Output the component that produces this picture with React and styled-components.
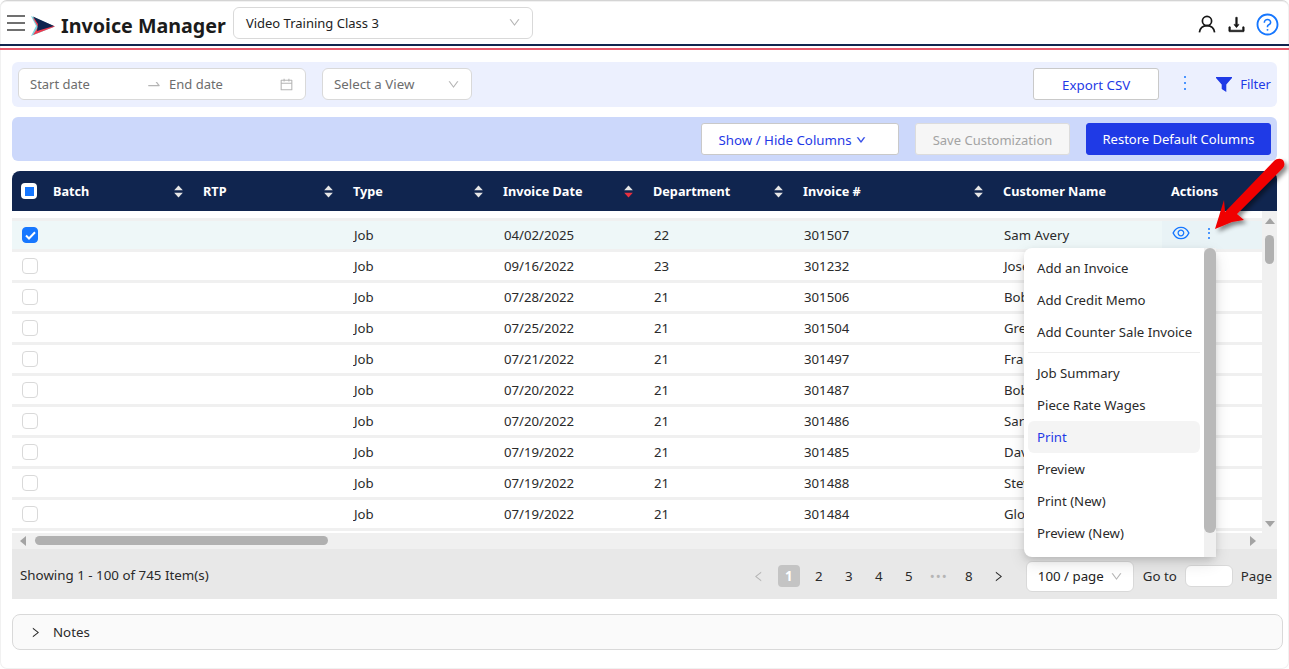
import React from 'react';
import styled, { createGlobalStyle } from 'styled-components';
import {
  AiOutlineCalendar,
  AiOutlineDown,
  AiOutlineDownload,
  AiOutlineEye,
  AiOutlineLeft,
  AiOutlineQuestionCircle,
  AiOutlineRight,
  AiOutlineSwapRight,
} from 'react-icons/ai';

const GlobalStyle = createGlobalStyle`
  html, body {
    margin: 0;
    padding: 0;
    height: 100%;
    background: #fff;
    overflow: hidden;
  }
  body {
    font-family: "Noto Sans", "Open Sans", sans-serif;
    font-size: 14px;
    color: #222;
  }
  * {
    box-sizing: border-box;
  }
`;

const Page = styled.div`
  position: relative;
  width: 1289px;
  height: 669px;
  overflow: hidden;
  border-top: 1px solid #d4d4d4;
  border-radius: 7px;
  box-shadow: inset 0 0 0 1px #f1f1f1;
`;

const Header = styled.header`
  display: flex;
  align-items: center;
  height: 43px;
  padding: 0 9px 0 7px;
`;

const Hamburger = styled.div`
  display: flex;
  flex-direction: column;
  justify-content: space-between;
  width: 18px;
  height: 16px;
  margin: 1px 7px 0 0;

  span {
    display: block;
    height: 2px;
    background: #707070;
  }
`;

const LogoMark = styled.svg`
  flex: none;
  margin: 6px 0 0 -1px;
`;

const Title = styled.h1`
  margin: 7px 7px 0 6px;
  font-size: 19.7px;
  line-height: 28px;
  font-weight: 700;
  color: #1b1b1b;
  white-space: nowrap;
`;

const Select = styled.div`
  display: flex;
  align-items: center;
  justify-content: space-between;
  width: ${(props) => props.width}px;
  height: ${(props) => props.height || 32}px;
  padding: 0 11px;
  background: #fff;
  border: 1px solid #d9d9d9;
  border-radius: 6px;
  color: ${(props) => (props.muted ? '#6d6d6d' : '#222')};
  font-size: 13.3px;
  white-space: nowrap;

  svg {
    color: #b5b5b5;
    font-size: 13px;
  }
`;

const ClassSelect = styled(Select)`
  padding: 0 11px 0 12px;
  font-size: 13px;
`;

const HeaderIcons = styled.div`
  display: flex;
  align-items: center;
  margin: 3px 0 0 auto;
  color: #161616;
`;

const DownloadIcon = styled(AiOutlineDownload)`
  font-size: 21px;
  margin: 0 8px 0 10px;
  stroke: #161616;
  stroke-width: 30;
`;

const HelpIcon = styled(AiOutlineQuestionCircle)`
  color: #1677ff;
  font-size: 25px;
`;

const Stripe = styled.div`
  height: 6px;
  border-top: 2px solid #10254f;
  border-bottom: 2px solid #e8596b;
`;

const Bar = styled.div`
  display: flex;
  align-items: center;
  margin: 0 12px;
  border-radius: 6px;
`;

const FilterBar = styled(Bar)`
  height: 45px;
  margin-top: 12px;
  padding: 0 6px 1px;
  gap: 16px;
  background: #ecf0fe;
`;

const DateRange = styled.div`
  display: flex;
  align-items: center;
  width: 288px;
  height: 32px;
  padding: 0 11px;
  background: #fff;
  border: 1px solid #d9d9d9;
  border-radius: 6px;
  color: #6d6d6d;
  font-size: 13px;
`;

const StartText = styled.span`
  width: 116px;
`;

const EndText = styled.span`
  flex: 1;
`;

const RangeArrow = styled(AiOutlineSwapRight)`
  color: #b5b5b5;
  font-size: 16px;
  margin-right: 7px;
`;

const CalendarIcon = styled(AiOutlineCalendar)`
  color: #b5b5b5;
  font-size: 15px;
`;

const FilterActions = styled.div`
  display: flex;
  align-items: center;
  margin-left: auto;
`;

const Button = styled.button`
  height: ${(props) => props.height || 32}px;
  width: ${(props) => props.width}px;
  padding: 1px 0 0;
  border-radius: 3px;
  border: 1px solid #c9c9c9;
  background: #fff;
  color: #1f3ae6;
  font-family: inherit;
  font-size: 13.3px;
  white-space: nowrap;
`;

const ColumnsButton = styled(Button)`
  padding-right: 16px;
`;

const DisabledButton = styled(Button)`
  background: #f6f6f6;
  border-color: #dcdcdc;
  color: #a3a3a3;
  font-size: 13px;
`;

const PrimaryButton = styled(Button)`
  padding-top: 0;
  background: #1f3ae6;
  border-color: #1f3ae6;
  color: #fff;
  font-size: 13px;
`;

const Dots = styled.span`
  display: flex;
  flex-direction: column;
  justify-content: space-between;
  width: 2px;
  height: ${(props) => props.tall}px;

  i {
    display: block;
    height: 2px;
    background: #1677ff;
    border-radius: 50%;
  }
`;

const BarDots = styled(Dots)`
  margin: -3px 0 0 25px;
`;

const FilterLink = styled.span`
  display: flex;
  align-items: center;
  gap: 8px;
  margin-left: 30px;
  color: #1f3ae6;
  font-size: 13px;
`;

const ColumnBar = styled(Bar)`
  height: 44px;
  margin-top: 10px;
  padding: 0 6px 0 0;
  justify-content: flex-end;
  gap: 16px;
  background: #ccd8fb;
`;

const DownSmall = styled(AiOutlineDown)`
  font-size: 10px;
  margin-left: 4px;
  stroke: currentColor;
  stroke-width: 60;
`;

const Table = styled.div`
  position: relative;
  margin: 10px 12px 0;
`;

const columns = '41px 150px 150px 150px 150px 150px 200px 168px minmax(0, 1fr)';

const HeadRow = styled.div`
  display: grid;
  grid-template-columns: ${columns};
  align-items: center;
  height: 40px;
  background: #10254f;
  border-radius: 8px 8px 0 0;
  color: #fff;
  font-size: 12.7px;
  font-weight: 700;
`;

const HeadCell = styled.div`
  display: flex;
  align-items: center;
  justify-content: space-between;
  padding-right: 20px;
  white-space: nowrap;
`;

const SelectAll = styled.span`
  display: flex;
  align-items: center;
  justify-content: center;
  width: 16px;
  height: 16px;
  margin-left: 9px;
  background: #fff;
  border-radius: 4px;

  i {
    display: block;
    width: 9px;
    height: 9px;
    background: #1677ff;
  }
`;

const BodyWrap = styled.div`
  display: grid;
  grid-template-columns: 1fr 15px;
  height: 322px;
`;

const Rows = styled.div`
  padding-top: 7px;
  overflow: hidden;
`;

const Row = styled.div`
  display: grid;
  grid-template-columns: ${columns};
  align-items: center;
  height: 31px;
  border-top: 3px solid #f0f0f0;
  background: ${(props) => (props.selected ? '#eef7f8' : '#fff')};
  font-size: 13.2px;
  color: #2a2a2a;

  &:last-child {
    height: 34px;
    border-bottom: 3px solid #f0f0f0;
  }
`;

const Cell = styled.div`
  padding-left: 1px;
  white-space: nowrap;
  overflow: hidden;
`;

const ActionCell = styled.div`
  grid-column: 9;
  align-self: stretch;
  display: flex;
  align-items: center;
  gap: 17px;
  margin-left: -9px;
  padding: 0 0 4px 9px;
  background: #e9f3f6;
  color: #1677ff;

  svg {
    font-size: 20px;
  }
`;

const Check = styled.span`
  display: flex;
  align-items: center;
  justify-content: center;
  width: 16px;
  height: 16px;
  margin-left: 10px;
  border-radius: 4px;
  border: 1px solid ${(props) => (props.checked ? '#1677ff' : '#d9d9d9')};
  background: ${(props) => (props.checked ? '#1677ff' : '#fff')};
`;

const VerticalTrack = styled.div`
  position: relative;
  display: flex;
  flex-direction: column;
  justify-content: space-between;
  align-items: center;
  padding: 7px 0 6px;
  background: #f0f0f0;
`;

const Triangle = styled.span`
  width: 0;
  height: 0;
  border-left: ${(props) => (props.dir === 'right' ? '6px solid #a3a3a3' : props.dir === 'left' ? 'none' : '5px solid transparent')};
  border-right: ${(props) => (props.dir === 'left' ? '6px solid #a3a3a3' : props.dir === 'right' ? 'none' : '5px solid transparent')};
  border-top: ${(props) => (props.dir === 'down' ? '6px solid #a3a3a3' : props.dir === 'up' ? 'none' : '5px solid transparent')};
  border-bottom: ${(props) => (props.dir === 'up' ? '6px solid #a3a3a3' : props.dir === 'down' ? 'none' : '5px solid transparent')};
`;

const VerticalThumb = styled.span`
  position: absolute;
  top: 24px;
  left: 3px;
  width: 9px;
  height: 29px;
  border-radius: 5px;
  background: #b0b0b0;
`;

const HorizontalTrack = styled.div`
  position: relative;
  display: flex;
  align-items: center;
  justify-content: space-between;
  height: 16px;
  padding: 0 21px 0 8px;
  background: #f0f0f0;
`;

const HorizontalThumb = styled.span`
  position: absolute;
  left: 23px;
  top: 3px;
  width: 293px;
  height: 9px;
  border-radius: 5px;
  background: #b0b0b0;
`;

const Footer = styled.div`
  display: flex;
  align-items: center;
  height: 50px;
  padding: 0 5px 0 8px;
  background: #e8e8e8;
  font-size: 13.35px;
  color: #2a2a2a;
`;

const ShowingText = styled.span`
  padding-top: 2px;
`;

const Pager = styled.div`
  display: flex;
  align-items: center;
  margin: 4px 0 0 auto;
  font-size: 13.3px;
`;

const PageItem = styled.span`
  display: flex;
  align-items: center;
  justify-content: center;
  width: 22px;
  height: 22px;
  margin-right: 8px;
  border-radius: 4px;
  background: ${(props) => (props.active ? '#c4c4c4' : 'transparent')};
  color: ${(props) => (props.active ? '#fff' : props.faded ? '#b5b5b5' : '#2a2a2a')};
  font-weight: ${(props) => (props.active ? 700 : 400)};
  letter-spacing: ${(props) => (props.faded ? '1px' : 0)};

  svg {
    font-size: 13px;
  }
`;

const PageSize = styled(Select)`
  margin: 0 9px 0 8px;
  padding: 0 10px 0 11px;
  border-radius: 6px;
  font-size: 13.3px;
`;

const GoInput = styled.span`
  display: block;
  width: 48px;
  height: 22px;
  margin: 0 8px;
  background: #fff;
  border: 1px solid #d9d9d9;
  border-radius: 6px;
`;

const Notes = styled.div`
  display: flex;
  align-items: center;
  gap: 11px;
  height: 36px;
  margin: 15px 6px 0 12px;
  padding-left: 16px;
  background: #fafafa;
  border: 1px solid #d9d9d9;
  border-radius: 8px;
  font-size: 13.3px;
  color: #2a2a2a;

  svg {
    font-size: 13px;
  }
`;

const Menu = styled.div`
  position: absolute;
  left: 1024px;
  top: 247px;
  width: 192px;
  height: 309px;
  padding: 4px 16px 4px 4px;
  background: #fff;
  border-radius: 8px;
  box-shadow: 0 6px 16px rgba(0, 0, 0, 0.12), 0 3px 6px rgba(0, 0, 0, 0.1);
`;

const MenuItem = styled.div`
  height: 32px;
  padding: 0 9px;
  line-height: 32px;
  border-radius: 6px;
  font-size: 13.2px;
  white-space: nowrap;
  background: ${(props) => (props.active ? '#f4f4f4' : 'transparent')};
  color: ${(props) => (props.active ? '#1f3ae6' : '#2a2a2a')};
`;

const MenuDivider = styled.div`
  height: 1px;
  margin: 4px 0 4px;
  background: #ededed;
`;

const MenuTrack = styled.div`
  position: absolute;
  top: 0;
  right: 0;
  bottom: 0;
  width: 12px;
  background: #f0f0f0;
`;

const MenuThumb = styled.span`
  position: absolute;
  top: 0;
  right: 0;
  width: 12px;
  height: 285px;
  border-radius: 6px;
  background: #b9b9b9;
`;

const Pointer = styled.svg`
  position: absolute;
  left: 1205px;
  top: 155px;
  width: 84px;
  height: 84px;
  overflow: visible;
`;

const Logo = () => (
  <LogoMark width="24" height="20" viewBox="0 0 24 20">
    <path d="M0 0 L24 10.5 L0 20 L5 10 Z" fill="#7fd3dc" />
    <path d="M2 2 L24 10.5 L2 19 L7 11 Z" fill="#ee3b50" />
    <path d="M2 0.5 L23 10 L6 15 L7 8 Z" fill="#10254f" />
  </LogoMark>
);

const UserIcon = () => (
  <svg width="18" height="18" viewBox="0 0 18 18" fill="none" stroke="#161616" strokeWidth="1.7">
    <circle cx="9" cy="6" r="4.6" />
    <path d="M1.4 17.4 C2 13 5 10.6 9 10.6 C13 10.6 16 13 16.6 17.4" />
  </svg>
);

const FunnelIcon = () => (
  <svg width="16" height="15" viewBox="0 0 16 15" fill="#1f3ae6">
    <path d="M0 0 H16 V1 L10.3 7.5 V15 L5.7 12 V7.5 L0 1 Z" />
  </svg>
);

const SortCaret = ({ active }) => (
  <svg width="9" height="13" viewBox="0 0 9 13">
    <path d="M4.5 0.5 L8.8 5.2 H0.2 Z" fill="#e6e6e6" />
    <path d="M4.5 12.5 L8.8 7.8 H0.2 Z" fill={active ? '#e8303f' : '#e6e6e6'} />
  </svg>
);

const CheckMark = () => (
  <svg width="11" height="9" viewBox="0 0 11 9" fill="none" stroke="#fff" strokeWidth="2">
    <path d="M1 4.5 L4 7.5 L10 1.2" />
  </svg>
);

const headers = [
  { label: 'Batch' },
  { label: 'RTP' },
  { label: 'Type' },
  { label: 'Invoice Date', active: true },
  { label: 'Department' },
  { label: 'Invoice #' },
  { label: 'Customer Name', plain: true },
];

const rows = [
  { date: '04/02/2025', dept: '22', invoice: '301507', name: 'Sam Avery' },
  { date: '09/16/2022', dept: '23', invoice: '301232', name: 'Jose' },
  { date: '07/28/2022', dept: '21', invoice: '301506', name: 'Bob' },
  { date: '07/25/2022', dept: '21', invoice: '301504', name: 'Greg' },
  { date: '07/21/2022', dept: '21', invoice: '301497', name: 'Frank' },
  { date: '07/20/2022', dept: '21', invoice: '301487', name: 'Bob' },
  { date: '07/20/2022', dept: '21', invoice: '301486', name: 'Sara' },
  { date: '07/19/2022', dept: '21', invoice: '301485', name: 'Dave' },
  { date: '07/19/2022', dept: '21', invoice: '301488', name: 'Steve' },
  { date: '07/19/2022', dept: '21', invoice: '301484', name: 'Gloria' },
];

const App = () => (
  <Page>
    <GlobalStyle />
    <Header>
      <Hamburger>
        <span />
        <span />
        <span />
      </Hamburger>
      <Logo />
      <Title>Invoice Manager</Title>
      <ClassSelect width={300}>
        Video Training Class 3
        <AiOutlineDown />
      </ClassSelect>
      <HeaderIcons>
        <UserIcon />
        <DownloadIcon />
        <HelpIcon />
      </HeaderIcons>
    </Header>
    <Stripe />

    <FilterBar>
      <DateRange>
        <StartText>Start date</StartText>
        <RangeArrow />
        <EndText>End date</EndText>
        <CalendarIcon />
      </DateRange>
      <Select width={150} muted>
        Select a View
        <AiOutlineDown />
      </Select>
      <FilterActions>
        <Button width={126}>Export CSV</Button>
        <BarDots tall={14}>
          <i />
          <i />
          <i />
        </BarDots>
        <FilterLink>
          <FunnelIcon />
          Filter
        </FilterLink>
      </FilterActions>
    </FilterBar>

    <ColumnBar>
      <ColumnsButton width={198}>
        Show / Hide Columns
        <DownSmall />
      </ColumnsButton>
      <DisabledButton width={155}>Save Customization</DisabledButton>
      <PrimaryButton width={185}>Restore Default Columns</PrimaryButton>
    </ColumnBar>

    <Table>
      <HeadRow>
        <SelectAll>
          <i />
        </SelectAll>
        {headers.map((h) => (
          <HeadCell key={h.label}>
            {h.label}
            {!h.plain && <SortCaret active={h.active} />}
          </HeadCell>
        ))}
        <HeadCell>Actions</HeadCell>
      </HeadRow>
      <BodyWrap>
        <Rows>
          {rows.map((r, i) => (
            <Row key={r.invoice} selected={i === 0}>
              <Check checked={i === 0}>{i === 0 && <CheckMark />}</Check>
              <Cell />
              <Cell />
              <Cell>Job</Cell>
              <Cell>{r.date}</Cell>
              <Cell>{r.dept}</Cell>
              <Cell>{r.invoice}</Cell>
              <Cell>{r.name}</Cell>
              {i === 0 && (
                <ActionCell>
                  <AiOutlineEye />
                  <Dots tall={11}>
                    <i />
                    <i />
                    <i />
                  </Dots>
                </ActionCell>
              )}
            </Row>
          ))}
        </Rows>
        <VerticalTrack>
          <Triangle dir="up" />
          <VerticalThumb />
          <Triangle dir="down" />
        </VerticalTrack>
      </BodyWrap>
      <HorizontalTrack>
        <Triangle dir="left" />
        <HorizontalThumb />
        <Triangle dir="right" />
      </HorizontalTrack>
      <Footer>
        <ShowingText>Showing 1 - 100 of 745 Item(s)</ShowingText>
        <Pager>
          <PageItem faded>
            <AiOutlineLeft />
          </PageItem>
          <PageItem active>1</PageItem>
          <PageItem>2</PageItem>
          <PageItem>3</PageItem>
          <PageItem>4</PageItem>
          <PageItem>5</PageItem>
          <PageItem faded>•••</PageItem>
          <PageItem>8</PageItem>
          <PageItem>
            <AiOutlineRight />
          </PageItem>
          <PageSize width={108} height={31}>
            100 / page
            <AiOutlineDown />
          </PageSize>
          Go to
          <GoInput />
          Page
        </Pager>
      </Footer>
    </Table>

    <Notes>
      <AiOutlineRight />
      Notes
    </Notes>

    <Menu>
      <MenuItem>Add an Invoice</MenuItem>
      <MenuItem>Add Credit Memo</MenuItem>
      <MenuItem>Add Counter Sale Invoice</MenuItem>
      <MenuDivider />
      <MenuItem>Job Summary</MenuItem>
      <MenuItem>Piece Rate Wages</MenuItem>
      <MenuItem active>Print</MenuItem>
      <MenuItem>Preview</MenuItem>
      <MenuItem>Print (New)</MenuItem>
      <MenuItem>Preview (New)</MenuItem>
      <MenuTrack>
        <MenuThumb />
      </MenuTrack>
    </Menu>

    <Pointer viewBox="0 0 84 84">
      <defs>
        <filter id="pointerShadow" x="-30%" y="-30%" width="170%" height="170%">
          <feDropShadow dx="3" dy="3" stdDeviation="2" floodColor="#000" floodOpacity="0.45" />
        </filter>
      </defs>
      <path
        d="M10 73 L19 44 L20 56 L69 5 C72 2 78 2 79 6 C80 9 79 11 77 13 L32 58 L39 64 L27 66 Z"
        fill="#f00000"
        filter="url(#pointerShadow)"
      />
    </Pointer>
  </Page>
);

export default App;
